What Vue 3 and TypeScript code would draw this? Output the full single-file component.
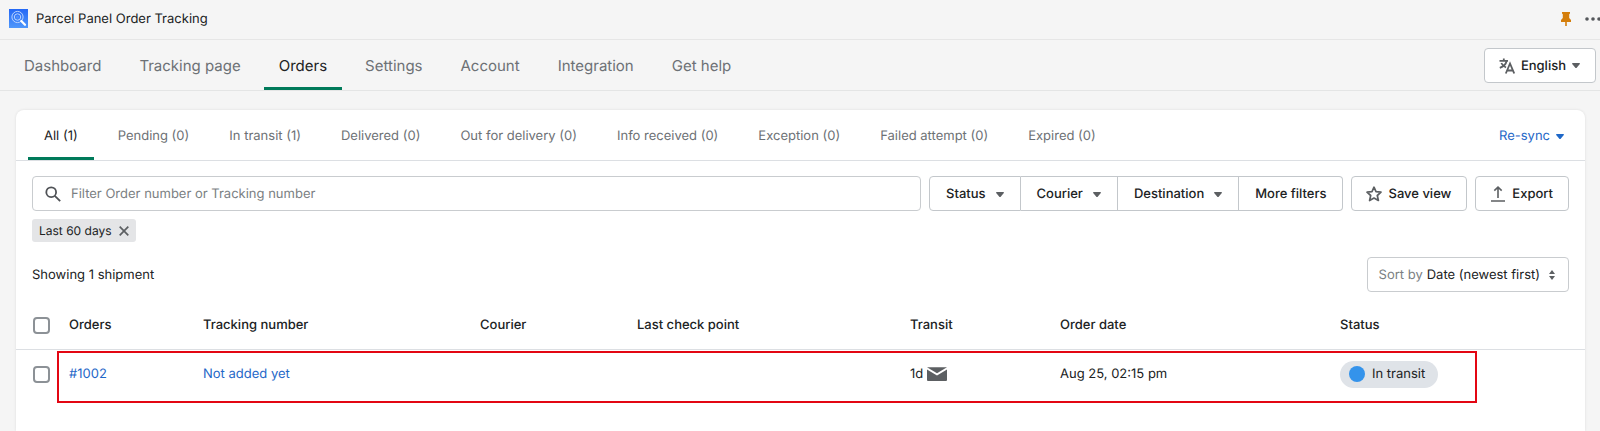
<script setup lang="ts">
import { ref } from 'vue'

interface Column {
  label: string
  width: number
}

const navItems = ['Dashboard', 'Tracking page', 'Orders', 'Settings', 'Account', 'Integration', 'Get help']
const activeNav = ref('Orders')

const tabs = [
  'All (1)',
  'Pending (0)',
  'In transit (1)',
  'Delivered (0)',
  'Out for delivery (0)',
  'Info received (0)',
  'Exception (0)',
  'Failed attempt (0)',
  'Expired (0)',
]
const activeTab = ref('All (1)')

const filters = ['Status', 'Courier', 'Destination']

const columns: Column[] = [
  { label: 'Orders', width: 134 },
  { label: 'Tracking number', width: 277 },
  { label: 'Courier', width: 157 },
  { label: 'Last check point', width: 273 },
  { label: 'Transit', width: 150 },
  { label: 'Order date', width: 280 },
  { label: 'Status', width: 245 },
]

const query = ref('')
const sort = ref('newest')
</script>

<template>
  <div class="app">
    <header class="titlebar">
      <svg class="logo" viewBox="0 0 19 19" aria-hidden="true">
        <defs>
          <linearGradient id="logo-fill" x1="0" y1="0" x2="0" y2="1">
            <stop offset="0" stop-color="#2468f5" />
            <stop offset="1" stop-color="#4f97fb" />
          </linearGradient>
        </defs>
        <rect width="19" height="19" fill="url(#logo-fill)" />
        <circle cx="8.5" cy="8" r="5.6" fill="none" stroke="#b9d3ff" stroke-width="1" />
        <circle cx="8.5" cy="8" r="3.2" fill="none" stroke="#b9d3ff" stroke-width="1" />
        <path d="M7 7.2l1.6-.8 1.5.8v1.7l-1.5.8-1.6-.8z" fill="#4d8bfa" />
        <path d="M12.3 12l3.7 3.8" stroke="#fff" stroke-width="2.2" stroke-linecap="round" />
      </svg>
      <span class="title">Parcel Panel Order Tracking</span>
      <button class="pin" type="button" aria-label="Unpin app">
        <svg viewBox="0 0 10 14" width="10" height="14">
          <path d="M1 0h8v1.5l-.8.8v3.6L10 8v2H5.8v4H4.2v-4H0V8l1.8-2.1V2.3L1 1.5z" fill="#d47e0b" />
        </svg>
      </button>
      <button class="more" type="button" aria-label="More actions">
        <svg viewBox="0 0 16 4" width="16" height="4" fill="#54575b">
          <circle cx="2" cy="2" r="1.8" /><circle cx="8" cy="2" r="1.8" /><circle cx="14" cy="2" r="1.8" />
        </svg>
      </button>
    </header>

    <div class="navbar">
      <nav class="nav" aria-label="Main">
        <a
          v-for="item in navItems"
          :key="item"
          href="#"
          class="nav-item"
          :class="{ active: item === activeNav }"
          @click.prevent="activeNav = item"
        >{{ item }}</a>
      </nav>
      <button class="button" type="button">
        <svg viewBox="0 0 16 16" width="16" height="16" fill="none" stroke="#5c5f62" stroke-width="1.8">
          <path d="M.5 2.8h8.5M4.8.5v2.3M7.6 3C7 6 4.5 8.5.8 9.8M2.3 5c1 2.2 2.6 3.5 4.7 4.5" />
          <path d="M6.8 15.5L11 5.5l4.2 10M8.3 12.5h5.4" />
        </svg>
        <span>English</span>
        <svg class="caret" viewBox="0 0 8 5" width="8" height="5"><path d="M.5 0h7L8 .8 4.5 5h-1L0 .8z" /></svg>
      </button>
    </div>

    <main class="card">
      <div class="tabs">
        <div class="tab-list" role="tablist">
          <button
            v-for="tab in tabs"
            :key="tab"
            type="button"
            role="tab"
            class="tab"
            :class="{ active: tab === activeTab }"
            :aria-selected="tab === activeTab"
            @click="activeTab = tab"
          >{{ tab }}</button>
        </div>
        <button class="resync" type="button">
          <span>Re-sync</span>
          <svg class="caret" viewBox="0 0 8 5" width="8" height="5"><path d="M.5 0h7L8 .8 4.5 5h-1L0 .8z" /></svg>
        </button>
      </div>

      <div class="controls">
        <div class="filters">
          <label class="search">
            <svg viewBox="0 0 16 16" width="16" height="16" fill="none" stroke="#4f5256" stroke-width="1.8">
              <circle cx="6.2" cy="6.2" r="4.9" />
              <path d="M9.8 9.8l5.4 5.4" />
            </svg>
            <input v-model="query" type="text" placeholder="Filter Order number or Tracking number" aria-label="Filter orders" />
          </label>
          <div class="button-group">
            <button v-for="filter in filters" :key="filter" class="button filter" type="button">
              <span>{{ filter }}</span>
              <svg class="caret" viewBox="0 0 8 5" width="8" height="5"><path d="M.5 0h7L8 .8 4.5 5h-1L0 .8z" /></svg>
            </button>
            <button class="button filter" type="button">More filters</button>
          </div>
          <button class="button" type="button">
            <svg viewBox="0 0 16 16" width="16" height="16" fill="none" stroke="#5c5f62" stroke-width="1.7" stroke-linejoin="round">
              <path d="M8 1.2l2 4.5 5 .5-3.7 3.3 1.100 5L8 12l-4.400 2.500 1.100-5L1 6.200l5-.5z" />
            </svg>
            <span>Save view</span>
          </button>
          <button class="button" type="button">
            <svg viewBox="0 0 16 16" width="16" height="16" fill="none" stroke="#5c5f62" stroke-width="1.6">
              <path d="M8 12V1.5M4.3 4.7L8 1.2l3.7 3.5M1 15h14" />
            </svg>
            <span>Export</span>
          </button>
        </div>
        <div class="tag">
          <span>Last 60 days</span>
          <button type="button" aria-label="Remove Last 60 days">
            <svg viewBox="0 0 10 10" width="10" height="10" fill="none" stroke="#5c5f62" stroke-width="1.7">
              <path d="M.7.7l8.6 8.6M9.3.7L.7 9.3" />
            </svg>
          </button>
        </div>
      </div>

      <div class="summary">
        <span>Showing 1 shipment</span>
        <label class="sort">
          <span class="sort-label">Sort by</span>
          <select v-model="sort">
            <option value="newest">Date (newest first)</option>
            <option value="oldest">Date (oldest first)</option>
          </select>
          <svg viewBox="0 0 6 10" width="6" height="10" fill="#5c5f62"><path d="M3 0l3 4H0zM3 10l3-4H0z" /></svg>
        </label>
      </div>

      <div class="table-wrap">
        <table>
          <colgroup>
            <col width="53" />
            <col v-for="column in columns" :key="column.label" :width="column.width" />
          </colgroup>
          <thead>
            <tr>
              <th class="check" scope="col"><input type="checkbox" aria-label="Select all orders" /></th>
              <th v-for="column in columns" :key="column.label" scope="col">{{ column.label }}</th>
            </tr>
          </thead>
          <tbody>
            <tr>
              <td class="check"><input type="checkbox" aria-label="Select order #1002" /></td>
              <td><a href="#">#1002</a></td>
              <td><a href="#">Not added yet</a></td>
              <td></td>
              <td></td>
              <td>
                <span class="transit">
                  1d
                  <svg viewBox="0 0 20 14" width="20" height="14">
                    <path d="M0 .3h20L10 6.3z" fill="#5c5f62" />
                    <path d="M0 2.6l10 6 10-6V13a1 1 0 0 1-1 1H1a1 1 0 0 1-1-1z" fill="#5c5f62" />
                  </svg>
                </span>
              </td>
              <td>Aug 25, 02:15 pm</td>
              <td><span class="badge"><span class="dot"></span>In transit</span></td>
            </tr>
          </tbody>
        </table>
        <div class="highlight"></div>
      </div>
    </main>
  </div>
</template>

<style>
html {
  background: #f5f5f5;
}
</style>

<style scoped>
.app {
  display: flex;
  flex-direction: column;
  min-height: 100vh;
  background: #f5f5f5;
  color: #202223;
  font: 13px/20px Inter, "Liberation Sans", sans-serif;
  text-rendering: geometricPrecision;
}

.app *,
.app {
  box-sizing: border-box;
}

button,
input,
select {
  margin: 0;
  padding: 0;
  border: 0;
  background: none;
  color: inherit;
  font: inherit;
  text-rendering: inherit;
}

a {
  color: #1f68c8;
  text-decoration: none;
}

svg {
  display: block;
  flex: none;
}

.caret {
  fill: #5c5f62;
}

.titlebar {
  display: flex;
  align-items: center;
  height: 40px;
  padding: 0 0 2px 9px;
  border-bottom: 1px solid #e6e6e6;
}

.logo {
  width: 19px;
  height: 19px;
}

.title {
  flex: 1;
  margin-left: 8px;
}

.pin {
  margin-right: 14px;
}

.more {
  width: 15px;
  overflow: hidden;
}

.navbar {
  display: flex;
  align-items: center;
  justify-content: space-between;
  height: 51px;
  padding: 0 4px 0 9px;
  border-bottom: 1px solid #e4e5e5;
}

.nav {
  display: flex;
  align-self: stretch;
  gap: 8px;
  font-size: 15px;
}

.nav-item {
  display: flex;
  align-items: center;
  padding: 4px 15px 0;
  border-bottom: 3px solid transparent;
  color: #6d7175;
}

.nav-item.active {
  border-color: #007a5a;
  color: #202223;
}

.button {
  display: flex;
  align-items: center;
  gap: 6px;
  height: 35px;
  padding: 1px 15px 0 14px;
  border: 1px solid #c3c7cb;
  border-radius: 4px;
  background: #fff;
  font-weight: 500;
  white-space: nowrap;
}

.card {
  flex: 1;
  margin: 19px 15px 0 16px;
  border-radius: 8px 8px 0 0;
  background: #fff;
  box-shadow: 0 0 3px rgba(23, 24, 24, 0.1);
}

.tabs {
  display: flex;
  justify-content: space-between;
  height: 51px;
  padding: 0 21px 0 12px;
  border-bottom: 1px solid #dcdfe3;
}

.tab-list {
  display: flex;
  gap: 8px;
}

.tab {
  padding: 5px 16px 0;
  border-bottom: 3px solid transparent;
  color: #6d7175;
}

.tab.active {
  border-color: #007a5a;
  color: #202223;
}

.resync {
  display: flex;
  align-items: center;
  gap: 6px;
  padding-top: 2px;
  color: #1f68c8;
}

.resync .caret {
  fill: #1f68c8;
}

.controls {
  padding: 15px 16px;
}

.filters {
  display: flex;
  gap: 8px;
}

.search {
  display: flex;
  flex: 1;
  align-items: center;
  gap: 10px;
  height: 35px;
  padding: 1px 12px 0;
  border: 1px solid #c9cccf;
  border-radius: 4px;
}

.search input {
  flex: 1;
  outline: none;
}

.search input::placeholder {
  color: #7b7f83;
  opacity: 1;
}

.button-group {
  display: flex;
}

.filter {
  gap: 10px;
  padding: 1px 16px 0;
  border-radius: 0;
}

.filter + .filter {
  border-left: 0;
}

.filter:first-child {
  border-radius: 4px 0 0 4px;
}

.filter:last-child {
  border-radius: 0 4px 4px 0;
}

.tag {
  display: inline-flex;
  align-items: center;
  gap: 7px;
  height: 23px;
  margin-top: 8px;
  padding: 0 7px;
  border-radius: 3px;
  background: #e4e5e7;
  font-size: 12px;
}

.summary {
  display: flex;
  align-items: center;
  justify-content: space-between;
  padding: 0 16px;
}

.sort {
  display: flex;
  align-items: center;
  gap: 4px;
  height: 35px;
  padding: 1px 13px 0 11px;
  border: 1px solid #c9cccf;
  border-radius: 4px;
}

.sort-label {
  color: #7b7f83;
}

.sort select {
  appearance: none;
  field-sizing: content;
}

.sort svg {
  margin-left: 5px;
}

.table-wrap {
  position: relative;
}

table {
  width: 100%;
  table-layout: fixed;
  border-collapse: collapse;
}

th,
td {
  height: 50px;
  padding: 0;
  text-align: left;
  font-weight: 400;
  white-space: nowrap;
}

th {
  height: 57px;
  padding-top: 10px;
  border-bottom: 1px solid #dcdfe3;
  font-weight: 500;
}

.check {
  padding-left: 17px;
}

.check input {
  display: block;
  width: 17px;
  height: 17px;
  border: 2px solid #8c9196;
  border-radius: 4px;
  appearance: none;
}

.check input:checked {
  background: #007a5a;
}

.transit {
  display: flex;
  align-items: center;
  gap: 4px;
}

.badge {
  display: inline-flex;
  align-items: center;
  gap: 7px;
  height: 27px;
  padding: 0 13px 0 9px;
  border-radius: 14px;
  background: #dfe3e8;
}

.dot {
  width: 16px;
  height: 16px;
  border-radius: 50%;
  background: #3493eb;
}

.highlight {
  position: absolute;
  top: 59px;
  right: 108px;
  left: 41px;
  height: 52px;
  border: 2px solid #e30613;
  pointer-events: none;
}
</style>
